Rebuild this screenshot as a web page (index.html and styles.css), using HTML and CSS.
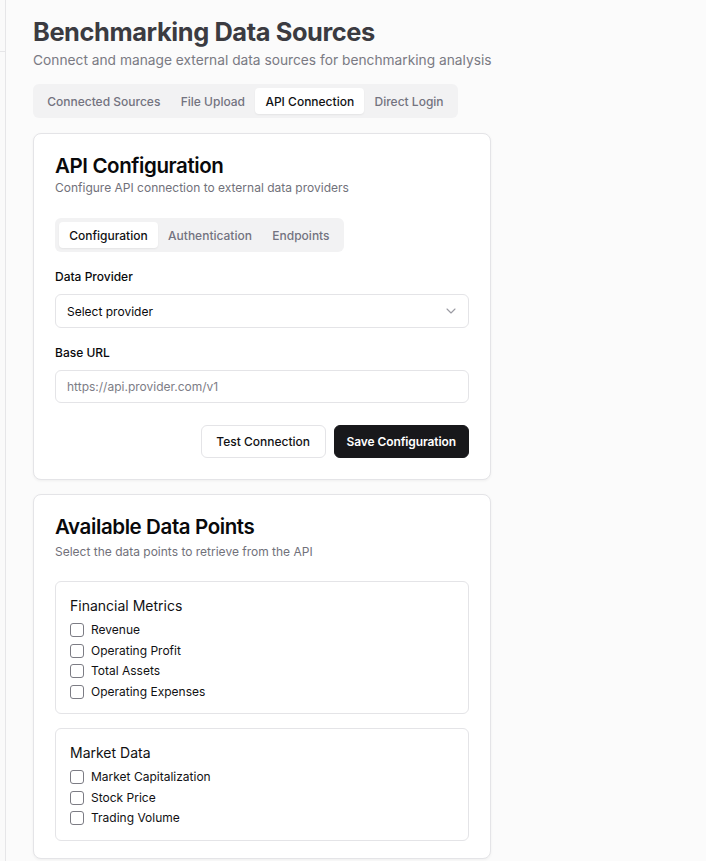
FILE: index.html
```html
<!DOCTYPE html>
<html lang="en">
<head>
<meta charset="utf-8">
<title>Benchmarking Data Sources</title>
<link rel="stylesheet" href="styles.css">
</head>
<body>
<div class="layout">
  <aside class="rail"><div class="rail-top"></div></aside>
  <main class="main">
    <h1 class="page-title">Benchmarking Data Sources</h1>
    <p class="page-sub">Connect and manage external data sources for benchmarking analysis</p>

    <div class="tabs">
      <button class="tab">Connected Sources</button>
      <button class="tab">File Upload</button>
      <button class="tab active">API Connection</button>
      <button class="tab">Direct Login</button>
    </div>

    <section class="card card-config">
      <h2 class="card-title">API Configuration</h2>
      <p class="card-desc">Configure API connection to external data providers</p>

      <div class="tabs tabs-inner">
        <button class="tab active">Configuration</button>
        <button class="tab">Authentication</button>
        <button class="tab">Endpoints</button>
      </div>

      <label class="field-label">Data Provider</label>
      <div class="select">
        <span>Select provider</span>
        <svg class="chev" width="16" height="16" viewBox="0 0 24 24" fill="none" stroke="currentColor" stroke-width="1.6" stroke-linecap="round" stroke-linejoin="round"><path d="m6 9 6 6 6-6"/></svg>
      </div>

      <label class="field-label field-label-2">Base URL</label>
      <div class="input">https://api.provider.com/v1</div>

      <div class="actions">
        <button class="btn btn-outline">Test Connection</button>
        <button class="btn btn-primary">Save Configuration</button>
      </div>
    </section>

    <section class="card card-points">
      <h2 class="card-title">Available Data Points</h2>
      <p class="card-desc card-desc-2">Select the data points to retrieve from the API</p>

      <div class="group">
        <h3 class="group-title">Financial Metrics</h3>
        <ul class="checks">
          <li><span class="box"></span>Revenue</li>
          <li><span class="box"></span>Operating Profit</li>
          <li><span class="box"></span>Total Assets</li>
          <li><span class="box"></span>Operating Expenses</li>
        </ul>
      </div>

      <div class="group">
        <h3 class="group-title">Market Data</h3>
        <ul class="checks">
          <li><span class="box"></span>Market Capitalization</li>
          <li><span class="box"></span>Stock Price</li>
          <li><span class="box"></span>Trading Volume</li>
        </ul>
      </div>
    </section>
  </main>
</div>
</body>
</html>
```

FILE: styles.css
```css
* { box-sizing: border-box; }
html, body { margin: 0; padding: 0; }
body {
  font-family: Inter, "Noto Sans", "Liberation Sans", sans-serif;
  background: #fbfbfb;
  color: #09090b;
  height: 861px;
  overflow: hidden;
}
.layout { display: flex; min-height: 861px; }
.rail {
  width: 6px;
  flex: 0 0 6px;
  border-right: 1px solid #e6e6e8;
  background: #fafafa;
}
.rail-top { height: 52px; border-bottom: 1px solid #e6e6e8; }
.main {
  padding: 16px 0 0 27px;
  width: 500px;
}
.page-title {
  margin: 0;
  font-size: 25.4px;
  line-height: 32px;
  font-weight: 700;
  letter-spacing: -0.4px;
  color: #3b3b41;
}
.page-sub {
  margin: 2px 0 0;
  font-size: 13.75px;
  line-height: 20px;
  color: #7a7a83;
  white-space: nowrap;
}
.tabs {
  display: inline-flex;
  margin-top: 14px;
  padding: 4px;
  height: 34px;
  background: #f2f2f3;
  border-radius: 6px;
}
.tab {
  border: 0;
  background: transparent;
  font: inherit;
  font-size: 12px;
  font-weight: 500;
  color: #737380;
  padding: 0 10.2px;
  height: 26px;
  border-radius: 4px;
  cursor: pointer;
}
.tab.active {
  background: #fff;
  color: #111113;
  box-shadow: 0 1px 2px rgba(0,0,0,0.06);
}
.card {
  display: block;
  width: 458px;
  background: #fff;
  border: 1px solid #e4e4e7;
  border-radius: 8px;
  box-shadow: 0 1px 3px rgba(0,0,0,0.05);
  padding: 18px 21px 21px;
}
.card-config { margin-top: 15px; }
.card-points { margin-top: 14px; padding-bottom: 17px; }
.card-title {
  margin: 0;
  font-size: 20.5px;
  line-height: 28px;
  font-weight: 600;
  letter-spacing: -0.4px;
  color: #09090b;
}
.card-desc {
  margin: 0;
  font-size: 12px;
  line-height: 16px;
  color: #71717a;
}
.card-desc-2 { margin-top: 3px; }
.tabs-inner { margin-top: 22px; display: flex; width: fit-content; }
.field-label {
  display: block;
  margin-top: 15px;
  font-size: 12px;
  line-height: 20px;
  font-weight: 500;
  color: #09090b;
}
.field-label-2 { margin-top: 15px; }
.select, .input {
  margin-top: 7px;
  height: 34px;
  border: 1px solid #e4e4e7;
  border-radius: 6px;
  display: flex;
  align-items: center;
  padding: 0 11px;
  font-size: 12px;
}
.select { justify-content: space-between; color: #09090b; padding-right: 9px; }
.chev { color: #9a9aa2; }
.input { color: #7d7d86; height: 33px; }
.actions {
  display: flex;
  justify-content: flex-end;
  gap: 8px;
  margin-top: 22px;
}
.btn {
  font: inherit;
  font-size: 12px;
  font-weight: 500;
  height: 33px;
  border-radius: 6px;
  padding: 0 14.5px;
  cursor: pointer;
}
.btn-outline { background: #fff; border: 1px solid #e4e4e7; color: #111113; }
.btn-primary { background: #18181b; border: 1px solid #18181b; color: #fff; font-weight: 600; padding: 0 12px; letter-spacing: -0.1px; }
.group {
  margin-top: 21px;
  border: 1px solid #e4e4e7;
  border-radius: 6px;
  padding: 14px 14px 11px;
}
.group + .group { margin-top: 14px; }
.group-title {
  margin: 0 0 4px;
  font-size: 14px;
  line-height: 20px;
  font-weight: 400;
  color: #111113;
}
.checks { list-style: none; margin: 0; padding: 0; }
.checks li {
  display: flex;
  align-items: center;
  gap: 7px;
  font-size: 12px;
  line-height: 20.5px;
  height: 20.5px;
  color: #111113;
}
.box {
  width: 14px;
  height: 14px;
  border: 1px solid #7c7c84;
  border-radius: 3px;
  flex: 0 0 14px;
}
```
